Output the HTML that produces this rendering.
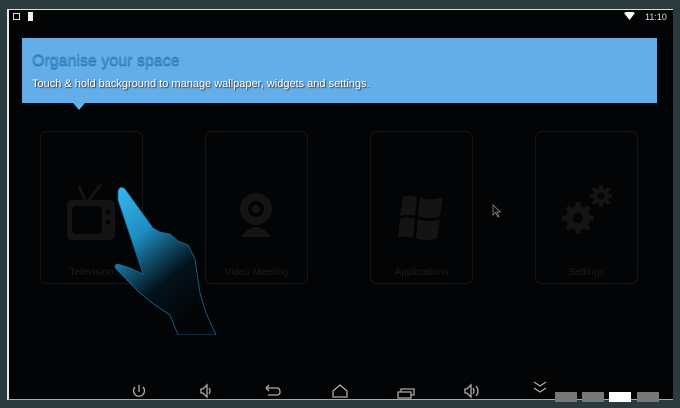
<!DOCTYPE html>
<html><head><style>
body{margin:0;width:680px;height:408px;overflow:hidden;background:#2b3a3c;font-family:"Liberation Sans",sans-serif;position:relative}
.scr{position:absolute;left:7px;top:9px;width:666px;height:391px;background:#030406;border-left:2px solid #e8e8e8;border-top:1px solid #ddd;border-bottom:1px solid #aaa;box-sizing:border-box}
.ban{position:absolute;left:22px;top:38px;width:635px;height:65px;background:#63aee8}
.ban:after{content:"";position:absolute;left:51px;top:65px;border:6px solid transparent;border-top:7px solid #63aee8;border-bottom:0}
.t1{position:absolute;left:10px;top:14px;font-size:16px;color:#3b93c9;text-shadow:0 1px 1px #1e5a80}
.t2{position:absolute;left:10px;top:40px;font-size:11px;color:#fff;text-shadow:1px 1px 1px #333}
.card{position:absolute;top:131px;width:103px;height:153px;border:1px solid #161616;border-radius:7px;box-sizing:border-box}
.lab{position:absolute;bottom:5px;width:100%;text-align:center;font-size:10px;color:#1c1c1c}
.sq{position:absolute;top:392px;width:22px;height:10px;background:#777}
</style></head><body>
<div class="scr"></div>
<div style="position:absolute;left:13px;top:13px;width:7px;height:7px;border:1px solid #ddd;box-sizing:border-box"></div>
<div style="position:absolute;left:28px;top:12px;width:5px;height:9px;background:#eee"></div>
<svg style="position:absolute;left:624px;top:12px" width="11" height="9"><path d="M0 1 Q5.5 -2 11 1 L5.5 8Z" fill="#fff"/></svg>
<div style="position:absolute;left:645px;top:12px;font-size:9px;color:#ddd">11:10</div>
<div class="ban"><div class="t1">Organise your space</div><div class="t2">Touch &amp; hold background to manage wallpaper, widgets and settings.</div></div>
<div class="card" style="left:40px"><div class="lab">Television</div>
<svg style="position:absolute;left:24px;top:50px" width="54" height="62"><path d="M20 18 L14 4 M24 18 L36 2" stroke="#141414" stroke-width="3"/><rect x="2" y="18" width="48" height="40" rx="6" fill="#141414"/><rect x="7" y="24" width="30" height="28" rx="4" fill="#030406"/><circle cx="43" cy="30" r="2.5" fill="#030406"/><circle cx="43" cy="40" r="2.5" fill="#030406"/></svg></div>
<div class="card" style="left:205px"><div class="lab">Video Meeting</div>
<svg style="position:absolute;left:30px;top:60px" width="40" height="50"><circle cx="20" cy="17" r="16" fill="#141414"/><circle cx="20" cy="17" r="8" fill="#030406"/><circle cx="20" cy="17" r="4" fill="#141414"/><path d="M5 45 Q20 25 35 45Z" fill="#141414"/></svg></div>
<div class="card" style="left:370px"><div class="lab">Applications</div>
<svg style="position:absolute;left:26px;top:60px" width="50" height="50"><path d="M6 5 Q12 2 20 5 L18 24 Q10 21 3 24Z M23 5 Q33 10 46 5 L43 24 Q32 28 21 24Z M3 27 Q10 24 18 27 L16 46 Q8 43 1 46Z M21 27 Q32 31 43 27 L40 46 Q30 50 19 46Z" fill="#141414"/></svg></div>
<div class="card" style="left:535px"><div class="lab">Settings</div>
<svg style="position:absolute;left:25px;top:48px" width="60" height="70"><g fill="#141414"><circle cx="17" cy="38" r="12"/><circle cx="40" cy="16" r="8"/></g><g stroke="#141414" stroke-width="5"><path d="M17 22 V54 M1 38 H33 M6 27 L28 49 M28 27 L6 49"/><path d="M40 5 V27 M29 16 H51 M32 8 L48 24 M48 8 L32 24" stroke-width="4"/></g><circle cx="17" cy="38" r="5" fill="#030406"/><circle cx="40" cy="16" r="3.5" fill="#030406"/></svg></div>
<svg style="position:absolute;left:100px;top:175px" width="120" height="160">
<defs><linearGradient id="g" x1="0" y1="0" x2="0.55" y2="1"><stop offset="0" stop-color="#3ab8f0"/><stop offset="0.35" stop-color="#1e8cbf"/><stop offset="0.7" stop-color="#03121a"/><stop offset="1" stop-color="#030406"/></linearGradient></defs>
<path d="M18 16 Q20 10 25 14 L53 53 L60 57 L70 59 L78 66 L88 70 L95 84 L100 118 L106 138 L116 160 L78 160 L70 140 L55 130 L40 118 L18 96 Q12 90 18 89 L30 93 L43 99 L18 25Z" fill="url(#g)" stroke="#1a6a90" stroke-width="0.8"/></svg>
<svg style="position:absolute;left:492px;top:204px" width="10" height="14"><path d="M1 1 L1 11 L3.5 8.5 L6 13 L7 12.5 L5 8 L8.5 8Z" fill="#111" stroke="#888" stroke-width="0.8"/></svg>
<svg style="position:absolute;left:0;top:380px" width="680" height="28" fill="none" stroke="#aaa" stroke-width="1.3">
<path d="M139 5 V12 M135 7 A5.5 5.5 0 1 0 143 7"/>
<path d="M201 9 H203 L207 5 V17 L203 13 H201Z M209 8 Q211 11 209 14"/>
<path d="M266 8 L269 5 M266 8 L269 11 M266 8 H277 Q280 8 280 12 Q280 15 277 15 H268"/>
<path d="M333 17 V11 L340 5 L347 11 V17Z"/>
<path d="M398 12 H411 V18 H398Z M401 12 V9 H414 V15 H411"/>
<path d="M465 9 H467 L471 5 V17 L467 13 H465Z M473 8 Q475 11 473 14 M476 6 Q480 11 476 16"/>
<path d="M534 2 L540 6 L546 2 M534 8 L540 12 L546 8"/>
</svg>
<div class="sq" style="left:555px"></div><div class="sq" style="left:582px"></div><div class="sq" style="left:609px;background:#fff"></div><div class="sq" style="left:637px"></div>
</body></html>
